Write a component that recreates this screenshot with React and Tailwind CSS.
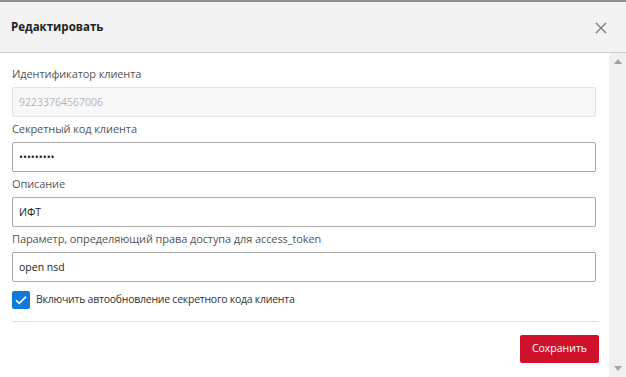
import React from "react";

function Field({ label, value, disabled, type = "text" }) {
  return (
    <div className="flex flex-col">
      <div className="h-[25px] flex items-center text-[11px] text-[#555] tracking-[-0.1px]">{label}</div>
      <input
        type={type}
        defaultValue={value}
        disabled={disabled}
        className={
          "h-[30px] w-full rounded-[2px] px-[6px] text-[10.5px] outline-none " +
          (disabled
            ? "bg-[#f8f8f8] border border-[#e3e3e3] text-[#b5b5b5]"
            : "bg-white border border-[#a8a8a8] text-[#222]")
        }
        style={{ fontFamily: "inherit" }}
      />
    </div>
  );
}

export default function App() {
  return (
    <div
      className="w-[626px] h-[377px] bg-white flex flex-col overflow-hidden"
      style={{ fontFamily: '"Open Sans", "Noto Sans", sans-serif' }}
    >
      <div className="h-[2px] bg-[#8f8f8f]" />
      <div className="h-[51px] bg-[#f3f3f3] border-b border-[#cfcfcf] flex items-center justify-between pl-[11px] pr-[19px]">
        <div className="text-[11.5px] font-bold text-[#222]">Редактировать</div>
        <svg width="12" height="12" viewBox="0 0 12 12" className="mt-[1px]">
          <path d="M1 1 L11 11 M11 1 L1 11" stroke="#7a7a7a" strokeWidth="1.3" fill="none" />
        </svg>
      </div>
      <div className="flex flex-1 min-h-0">
        <div className="flex-1 flex flex-col pl-[12px] pt-[9px]">
          <div className="flex flex-col gap-0 pr-[13px]">
            <Field label="Идентификатор клиента" value="92233764567006" disabled />
            <Field label="Секретный код клиента" value="secretpw1" type="password" />
            <Field label="Описание" value="ИФТ" />
            <Field label="Параметр, определяющий права доступа для access_token" value="open nsd" />
            <div className="flex items-center gap-[6px] mt-[9px] h-[18px]">
              <div className="w-[18px] h-[18px] rounded-[2px] bg-[#0f7ad8] flex items-center justify-center">
                <svg width="14" height="14" viewBox="0 0 14 14">
                  <path d="M2 7.2 L5.3 10.4 L12 3.6" stroke="white" strokeWidth="1.6" fill="none" />
                </svg>
              </div>
              <div className="text-[10.5px] text-[#333] tracking-[-0.25px]">Включить автообновление секретного кода клиента</div>
            </div>
          </div>
          <div className="mt-[12px] mr-[10px] border-t border-[#e0e0e0]" />
          <div className="flex justify-end pr-[10px] mt-[13px]">
            <button className="w-[79px] h-[28px] rounded-[2px] bg-[#d0112b] text-white text-[10.5px]">
              Сохранить
            </button>
          </div>
        </div>
        <div className="w-[17px] bg-[#f0f0f0] flex flex-col items-center justify-between py-[6px]">
          <svg width="8" height="5" viewBox="0 0 8 5"><path d="M0 5 L4 0 L8 5 Z" fill="#a3a3a3" /></svg>
          <svg width="8" height="5" viewBox="0 0 8 5"><path d="M0 0 L4 5 L8 0 Z" fill="#a3a3a3" /></svg>
        </div>
      </div>
    </div>
  );
}
